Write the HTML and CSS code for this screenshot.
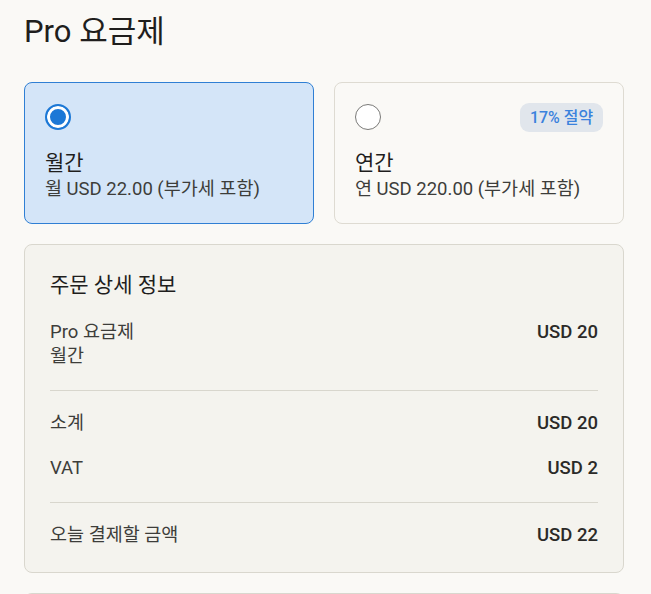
FILE: index.html
```html
<!DOCTYPE html>
<html lang="ko">
<head>
<meta charset="utf-8">
<link rel="stylesheet" href="styles.css">
</head>
<body>
<main class="page">
  <h1 class="title">Pro 요금제</h1>
  <div class="plans">
    <div class="plan selected">
      <div class="plan-top">
        <span class="radio on"></span>
      </div>
      <div class="plan-name">월간</div>
      <div class="plan-price">월 USD 22.00 (부가세 포함)</div>
    </div>
    <div class="plan">
      <div class="plan-top">
        <span class="radio"></span>
        <span class="badge">17% 절약</span>
      </div>
      <div class="plan-name">연간</div>
      <div class="plan-price">연 USD 220.00 (부가세 포함)</div>
    </div>
  </div>
  <section class="details">
    <h2 class="details-title">주문 상세 정보</h2>
    <div class="row first">
      <div class="label">Pro 요금제<br>월간</div>
      <div class="value">USD 20</div>
    </div>
    <hr class="divider">
    <div class="row">
      <div class="label">소계</div>
      <div class="value">USD 20</div>
    </div>
    <div class="row vat">
      <div class="label">VAT</div>
      <div class="value">USD 2</div>
    </div>
    <hr class="divider">
    <div class="row total">
      <div class="label">오늘 결제할 금액</div>
      <div class="value">USD 22</div>
    </div>
  </section>
  <div class="next-card"></div>
</main>
</body>
</html>
```
FILE: styles.css
```css
* { box-sizing: border-box; }
html, body {
  margin: 0;
  padding: 0;
  background: #faf9f6;
}
body {
  font-family: "Roboto", "Noto Sans CJK KR", sans-serif;
  color: #3d3d3a;
}
.page {
  padding: 0 27px 0 24px;
}
.title {
  margin: 0;
  padding-top: 13px;
  height: 82px;
  font-size: 31px;
  font-weight: 400;
  line-height: 38px;
  color: #1f1e1d;
}
.plans {
  display: grid;
  grid-template-columns: 1fr 1fr;
  gap: 20px;
}
.plan {
  height: 142px;
  border: 1px solid #dedbd2;
  border-radius: 8px;
  background: #faf9f6;
  padding: 21px 20px 0 20px;
}
.plan.selected {
  background: #d4e5f8;
  border-color: #2f7fd4;
}
.plan-top {
  display: flex;
  align-items: center;
  justify-content: space-between;
  height: 26px;
}
.radio {
  width: 26px;
  height: 26px;
  border-radius: 50%;
  background: #fff;
  border: 1.5px solid #7a7a78;
  display: block;
}
.radio.on {
  border: 2px solid #1c78d6;
  background: #1c78d6;
  box-shadow: inset 0 0 0 3px #fff;
}
.badge {
  background: #e1e6ec;
  color: #3a82dd;
  font-size: 15.9px;
  font-weight: 500;
  line-height: 29px;
  height: 29px;
  padding: 0 10px;
  border-radius: 9px;
}
.plan-name {
  margin-top: 20px;
  font-size: 21px;
  line-height: 26px;
  color: #1f1e1d;
}
.plan-price {
  margin-top: 1px;
  font-size: 18.5px;
  line-height: 24px;
  color: #3d3d3a;
}
.details {
  margin-top: 20px;
  border: 1px solid #d9d7ce;
  border-radius: 8px;
  background: #f4f3ee;
  padding: 26px 25px 25px 25px;
}
.details-title {
  margin: 0;
  font-size: 21px;
  font-weight: 400;
  line-height: 28px;
  color: #1f1e1d;
}
.row {
  display: flex;
  justify-content: space-between;
  align-items: flex-start;
  font-size: 18.5px;
  line-height: 24px;
}
.row.first { margin-top: 21px; }
.row.vat { margin-top: 21px; }
.label { color: #3d3d3a; }
.value {
  font-weight: 500;
  color: #2b2a28;
}
.divider {
  border: 0;
  border-top: 1px solid #d8d6cd;
  margin: 22px 0 20px 0;
}
.next-card {
  margin-top: 20px;
  height: 20px;
  border: 1px solid #d9d7ce;
  border-bottom: 0;
  border-radius: 8px 8px 0 0;
  background: #f4f3ee;
}
```
